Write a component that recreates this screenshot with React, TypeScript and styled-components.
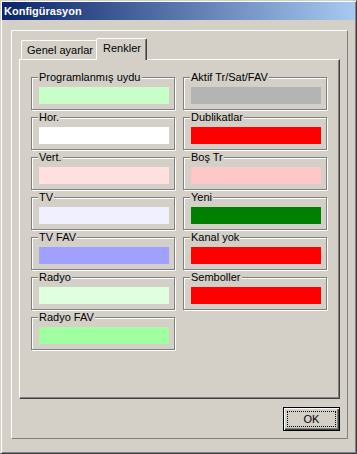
import styled, { createGlobalStyle } from "styled-components";

const LEFT_COLORS = [
  { label: "Programlanmış uydu", color: "#c8ffc8" },
  { label: "Hor.", color: "#ffffff" },
  { label: "Vert.", color: "#ffe0e0" },
  { label: "TV", color: "#f0f0ff" },
  { label: "TV FAV", color: "#a0a0ff" },
  { label: "Radyo", color: "#e0ffe0" },
  { label: "Radyo FAV", color: "#a0ffa0" },
];

const RIGHT_COLORS = [
  { label: "Aktif Tr/Sat/FAV", color: "#b4b4b4" },
  { label: "Dublikatlar", color: "#ff0000" },
  { label: "Boş Tr", color: "#ffc8c8" },
  { label: "Yeni", color: "#008000" },
  { label: "Kanal yok", color: "#ff0000" },
  { label: "Semboller", color: "#ff0000" },
];

export default function App() {
  return (
    <>
      <GlobalStyle />
      <Window>
        <TitleBar>Konfigürasyon</TitleBar>
        <Client>
          <Frame>
            <TabStrip>
              <Tab type="button">Genel ayarlar</Tab>
              <Tab type="button" $active>
                Renkler
              </Tab>
            </TabStrip>
            <TabPage>
              <Column>
                {LEFT_COLORS.map((item) => (
                  <ColorGroup key={item.label} label={item.label} color={item.color} />
                ))}
              </Column>
              <Column>
                {RIGHT_COLORS.map((item) => (
                  <ColorGroup key={item.label} label={item.label} color={item.color} />
                ))}
              </Column>
            </TabPage>
            <ButtonRow>
              <OkButton type="button">
                <FocusRect>OK</FocusRect>
              </OkButton>
            </ButtonRow>
          </Frame>
        </Client>
      </Window>
    </>
  );
}

function ColorGroup({ label, color }: { label: string; color: string }) {
  return (
    <Group>
      <Caption>{label}</Caption>
      <Swatch $color={color} />
    </Group>
  );
}

const GlobalStyle = createGlobalStyle`
  html, body {
    margin: 0;
    padding: 0;
    background: #d4d0c8;
  }

  * {
    box-sizing: border-box;
  }

  body {
    font-family: "Liberation Sans", Arial, sans-serif;
    font-size: 11px;
    color: #000;
  }
`;

const Window = styled.div`
  display: flex;
  flex-direction: column;
  width: 357px;
  height: 454px;
  background: #d4d0c8;
  border: 1px solid;
  border-color: #d4d0c8 #404040 #404040 #d4d0c8;
  box-shadow: inset 1px 1px 0 #fff, inset -1px -1px 0 #808080;
  padding: 1px;
`;

const TitleBar = styled.div`
  height: 18px;
  flex: none;
  display: flex;
  align-items: center;
  padding-left: 2px;
  background: linear-gradient(to right, #0a246a, #a6caf0);
  color: #fff;
  font-weight: bold;
  font-size: 11px;
  line-height: 13px;
`;

const Client = styled.div`
  flex: 1;
  padding: 10px 7px 13px 9px;
`;

const Frame = styled.div`
  display: flex;
  flex-direction: column;
  width: 337px;
  padding: 7px;
  border: 1px solid;
  border-color: #fff #808080 #808080 #fff;
`;

const TabStrip = styled.div`
  display: flex;
  align-items: flex-end;
  height: 21px;
  padding-left: 2px;
`;

const Tab = styled.button<{ $active?: boolean }>`
  position: relative;
  z-index: ${({ $active }) => ($active ? 1 : 0)};
  height: ${({ $active }) => ($active ? "22px" : "19px")};
  margin: ${({ $active }) => ($active ? "0 0 -1px -2px" : "0")};
  padding: ${({ $active }) => ($active ? "0 5px 3px 6px" : "0 4px 0 5px")};
  border: 1px solid;
  border-bottom: 0;
  border-color: #fff #404040 transparent #fff;
  border-radius: 2px 2px 0 0;
  box-shadow: inset -1px 0 0 #808080;
  background: #d4d0c8;
  font-family: "Liberation Sans", Arial, sans-serif;
  font-size: 11px;
  line-height: 13px;
  color: #000;
  white-space: nowrap;
  cursor: default;
`;

const TabPage = styled.div`
  display: grid;
  grid-template-columns: 144px 144px;
  column-gap: 8px;
  align-content: start;
  width: 321px;
  height: 340px;
  padding: 17px 12px 0 11px;
  border: 1px solid;
  border-color: #fff #404040 #404040 #fff;
  box-shadow: inset -1px -1px 0 #808080;
`;

const Column = styled.div`
  display: flex;
  flex-direction: column;
  gap: 7px;
`;

const Group = styled.div`
  position: relative;
  height: 33px;
  padding: 9px 5px 5px 7px;
  border: 1px solid #808080;
  box-shadow: inset 1px 1px 0 #fff, 1px 1px 0 #fff;
`;

const Caption = styled.span`
  position: absolute;
  top: -7px;
  left: 6px;
  padding: 0 1px;
  background: #d4d0c8;
  line-height: 13px;
  white-space: nowrap;
`;

const Swatch = styled.div<{ $color: string }>`
  width: 130px;
  height: 17px;
  background: ${({ $color }) => $color};
`;

const ButtonRow = styled.div`
  display: flex;
  justify-content: flex-end;
  margin-top: 8px;
`;

const OkButton = styled.button`
  display: flex;
  width: 57px;
  height: 24px;
  padding: 3px;
  border: 1px solid #000;
  background: #d4d0c8;
  box-shadow: inset 1px 1px 0 #fff, inset -1px -1px 0 #404040,
    inset -2px -2px 0 #808080;
  font-family: "Liberation Sans", Arial, sans-serif;
  font-size: 11px;
  color: #000;
  cursor: default;
`;

const FocusRect = styled.span`
  flex: 1;
  display: flex;
  align-items: center;
  justify-content: center;
  border: 1px dotted #000;
  line-height: 13px;
`;
